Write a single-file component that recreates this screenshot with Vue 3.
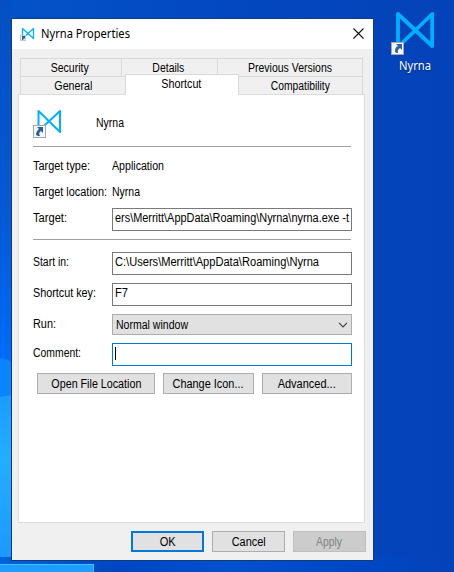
<script setup>
const backTabs = [
  { name: 'Security', cls: 'security', width: 38 },
  { name: 'Details', cls: 'details', width: 32 },
  { name: 'Previous Versions', cls: 'previous', width: 84 },
]
const frontTabs = [
  { name: 'General', cls: 'general', width: 38 },
  { name: 'Shortcut', cls: 'shortcut', width: 40 },
  { name: 'Compatibility', cls: 'compat', width: 59 },
]

// Condenses a label horizontally to the given width in pixels.
const vFit = {
  mounted(el, { value }) {
    el.style.transform = `scaleX(${value / el.getBoundingClientRect().width})`
  },
}
</script>

<template>
  <main class="desktop">
    <svg class="wallpaper" width="454" height="572" viewBox="0 0 454 572">
      <defs>
        <linearGradient id="base" x1="0" y1="0" x2="1" y2="0">
          <stop offset="0" stop-color="#0453c9" />
          <stop offset=".5" stop-color="#0348c0" />
          <stop offset="1" stop-color="#0442b9" />
        </linearGradient>
        <linearGradient id="edge" x1="0" y1="0" x2="0" y2="1">
          <stop offset="0" stop-color="#0450c2" />
          <stop offset=".35" stop-color="#0458d2" />
          <stop offset=".55" stop-color="#0066ee" />
          <stop offset=".62" stop-color="#006cf8" />
        </linearGradient>
        <linearGradient id="pane" x1="0" y1="0" x2="0" y2="1">
          <stop offset="0" stop-color="#1a9cff" />
          <stop offset=".4" stop-color="#24aeff" />
          <stop offset="1" stop-color="#1c98fe" />
        </linearGradient>
        <linearGradient id="floor" x1="0" y1="0" x2="1" y2="0">
          <stop offset="0" stop-color="#0062dc" />
          <stop offset=".25" stop-color="#0046c2" />
          <stop offset=".5" stop-color="#0050d0" />
          <stop offset=".75" stop-color="#0048c6" />
          <stop offset="1" stop-color="#0442b9" />
        </linearGradient>
      </defs>
      <rect width="454" height="572" fill="url(#base)" />
      <rect width="12" height="572" fill="url(#edge)" />
      <path d="M0 358 Q8 359 12 362 V400 H0Z" fill="#0a84ff" />
      <path d="M0 397 L12 395 V558 H0Z" fill="url(#pane)" />
      <rect y="557" width="454" height="15" fill="url(#floor)" />
      <rect y="564" width="94" height="8" fill="#1f9dff" />
      <path d="M0 564.5 H93.500 V572" fill="none" stroke="#38c4fb" />
    </svg>

    <div class="launcher">
      <svg class="launcher-icon" width="46" height="46" viewBox="0 0 46 46">
        <path d="M7 35V4L41.200 36V4L8 36" class="logo thick" />
        <rect x=".5" y="32.500" width="12" height="12" class="badge" />
        <path d="M5 34h6v6l-2-2q-3 2-2 5-3 0-3-2 0-4 3-5z" fill="#2e62a6" />
      </svg>
      <span class="launcher-name"><b v-fit="32">Nyrna</b></span>
    </div>

    <section class="window">
      <header class="titlebar">
        <svg width="15" height="16" viewBox="0 0 15 16">
          <path d="M2.500 12V2.500L13.500 12.500V2.500L2.500 12.500" class="logo slim" />
          <rect x=".5" y="9.500" width="5" height="5" fill="#eef1f5" stroke="#c5c8ce" />
          <path d="M2 10h3v3l-1-1-1 2H2z" fill="#285c9e" />
        </svg>
        <h1><b v-fit="89">Nyrna Properties</b></h1>
        <svg class="close" width="11" height="11" viewBox="0 0 11 11">
          <path d="M.5 .5L10.500 10.500M10.500 .5L.5 10.500" stroke="#111" stroke-width="1.100" />
        </svg>
      </header>

      <nav class="tabs">
        <div class="tabrow back">
          <span v-for="t in backTabs" :key="t.name" class="tab" :class="t.cls"><b v-fit="t.width">{{ t.name }}</b></span>
        </div>
        <div class="tabrow front">
          <span v-for="t in frontTabs" :key="t.name" class="tab" :class="t.cls"><b v-fit="t.width">{{ t.name }}</b></span>
        </div>
      </nav>

      <div class="panel">
        <div class="identity">
          <svg width="29" height="30" viewBox="0 0 29 30">
            <path d="M5.500 21V2L27 23V2L5.500 22" class="logo" />
            <rect x=".5" y="16.500" width="12" height="12" class="badge" />
            <path d="M4 18h6v6l-2-2q-3 2-1 5-4 0-4-2 0-3 3-5z" fill="#2e5c9e" />
          </svg>
          <span class="name"><b v-fit="28">Nyrna</b></span>
        </div>
        <hr />
        <div class="row info"><label><b v-fit="57">Target type:</b></label><span><b v-fit="52">Application</b></span></div>
        <div class="row info"><label><b v-fit="74">Target location:</b></label><span><b v-fit="28">Nyrna</b></span></div>
        <div class="row target">
          <label><b v-fit="34">Target:</b></label>
          <div class="field"><b v-fit="234">ers\Merritt\AppData\Roaming\Nyrna\nyrna.exe -t</b></div>
        </div>
        <hr class="second" />
        <div class="row start">
          <label><b v-fit="36">Start in:</b></label>
          <div class="field"><b v-fit="204">C:\Users\Merritt\AppData\Roaming\Nyrna</b></div>
        </div>
        <div class="row key">
          <label><b v-fit="63">Shortcut key:</b></label>
          <div class="field"><b v-fit="13">F7</b></div>
        </div>
        <div class="row run">
          <label><b v-fit="23">Run:</b></label>
          <div class="select">
            <b v-fit="72">Normal window</b>
            <svg width="10" height="6" viewBox="0 0 10 6"><path d="M1 .8L5 4.800L9 .8" fill="none" stroke="#444" stroke-width="1.200" /></svg>
          </div>
        </div>
        <div class="row comment">
          <label><b v-fit="48">Comment:</b></label>
          <div class="field focus"><i class="caret"></i></div>
        </div>
        <div class="actions">
          <button class="open"><b v-fit="90">Open File Location</b></button>
          <button class="change"><b v-fit="71">Change Icon...</b></button>
          <button class="advanced"><b v-fit="58">Advanced...</b></button>
        </div>
      </div>

      <footer>
        <button class="ok"><b v-fit="16">OK</b></button>
        <button class="cancel"><b v-fit="34">Cancel</b></button>
        <button class="apply" disabled><b v-fit="26">Apply</b></button>
      </footer>
    </section>
  </main>
</template>

<style>
body { margin: 0; overflow: hidden; }
</style>

<style scoped>
* { box-sizing: border-box; }
.desktop { position: relative; width: 454px; height: 572px; overflow: hidden; font: 12px/16px "Liberation Sans", Arial, sans-serif; color: #000; white-space: nowrap; }
b { display: inline-block; flex: none; font-weight: 400; transform-origin: 0 50%; }
.tab b, button b { transform-origin: 50% 50%; }
.wallpaper { display: block; }
.logo { fill: none; stroke: #00b0ff; stroke-width: 2; stroke-linejoin: round; }
.thick { stroke-width: 3.8; }
.slim { stroke-width: 1.3; }
.badge { fill: #f5f6f8; stroke: #a5a5a5; }
.launcher { position: absolute; left: 391px; top: 10px; width: 48px; display: flex; flex-direction: column; }
.launcher-icon { display: block; }
.launcher-name { font: 12px/16px "Noto Sans", sans-serif; color: #fff; margin-top: 2px; padding-left: 8px; text-shadow: 0 1px 1px #00286f; }
.window { position: absolute; left: 11px; top: 18px; width: 363px; height: 543px; background: #f0f0f0; border: 1px solid #133a7c; display: flex; flex-direction: column; }
.titlebar { height: 30px; background: #fff; display: flex; align-items: center; padding: 0 9px 0 8px; flex: none; }
.titlebar h1 { margin: 0 0 0 6px; width: 92px; font: 12px/16px "Noto Sans", sans-serif; }
.close { margin: -2px 0 0 auto; }
.tabs { padding: 9px 10px 0 8px; display: flex; flex-direction: column; flex: none; }
.tabrow { display: flex; height: 18px; border-left: 1px solid #d9d9d9; }
.tab { border-top: 1px solid #d9d9d9; border-right: 1px solid #d9d9d9; display: flex; justify-content: center; line-height: 19px; }
.security { width: 101px; padding-right: 2px; }
.details { width: 96px; padding-right: 2px; }
.previous { flex: 1; }
.general { width: 104px; border-right: 0; }
.shortcut { position: relative; z-index: 1; width: 114px; height: 21px; margin-top: -2px; background: #fff; border-left: 1px solid #d9d9d9; padding-right: 1px; }
.compat { flex: 1; }
.panel { margin: 0 8px 0 6px; width: 347px; height: 429px; flex: none; background: #fff; border: 1px solid #dcdcdc; padding: 14px 12px 0 14px; }
.identity { display: flex; height: 37px; }
.name { padding: 6px 0 0 34px; }
hr { border: 0; height: 1px; background: #a0a0a0; margin: 0; width: 318px; }
.second { margin-top: 8px; }
.row { display: flex; width: 319px; height: 23px; }
.row label { width: 79px; flex: none; }
.info { height: 26px; padding-top: 11px; }
.target { margin-top: 9px; }
.target label, .start label, .key label, .run label, .comment label { padding-top: 2px; }
.start { margin-top: 12px; }
.key, .run, .comment { margin-top: 8px; }
.run { height: 21px; }
.field { width: 240px; height: 23px; border: 1px solid #7a7a7a; padding: 1px 2px 0; background: #fff; display: flex; }
.focus { border-color: #0078d7; }
.caret { width: 1px; height: 13px; margin-top: 2px; background: #000; }
.select { width: 240px; height: 21px; border: 1px solid #adadad; background: #e1e1e1; display: flex; justify-content: space-between; align-items: center; padding: 1px 3px 0; }
.actions { display: flex; gap: 8px; margin: 7px 0 0 4px; }
button { height: 21px; border: 1px solid #adadad; background: #e1e1e1; padding: 0; font: inherit; color: inherit; line-height: 18px; display: flex; align-items: center; justify-content: center; }
.open { width: 118px; }
.change { width: 91px; }
.advanced { width: 90px; }
footer { display: flex; justify-content: flex-end; gap: 8px; padding: 8px 7px 0 0; }
footer button { width: 73px; }
.ok { border: 2px solid #0078d7; }
.apply { background: #ccc; border-color: #bfbfbf; color: #838383; }
</style>
